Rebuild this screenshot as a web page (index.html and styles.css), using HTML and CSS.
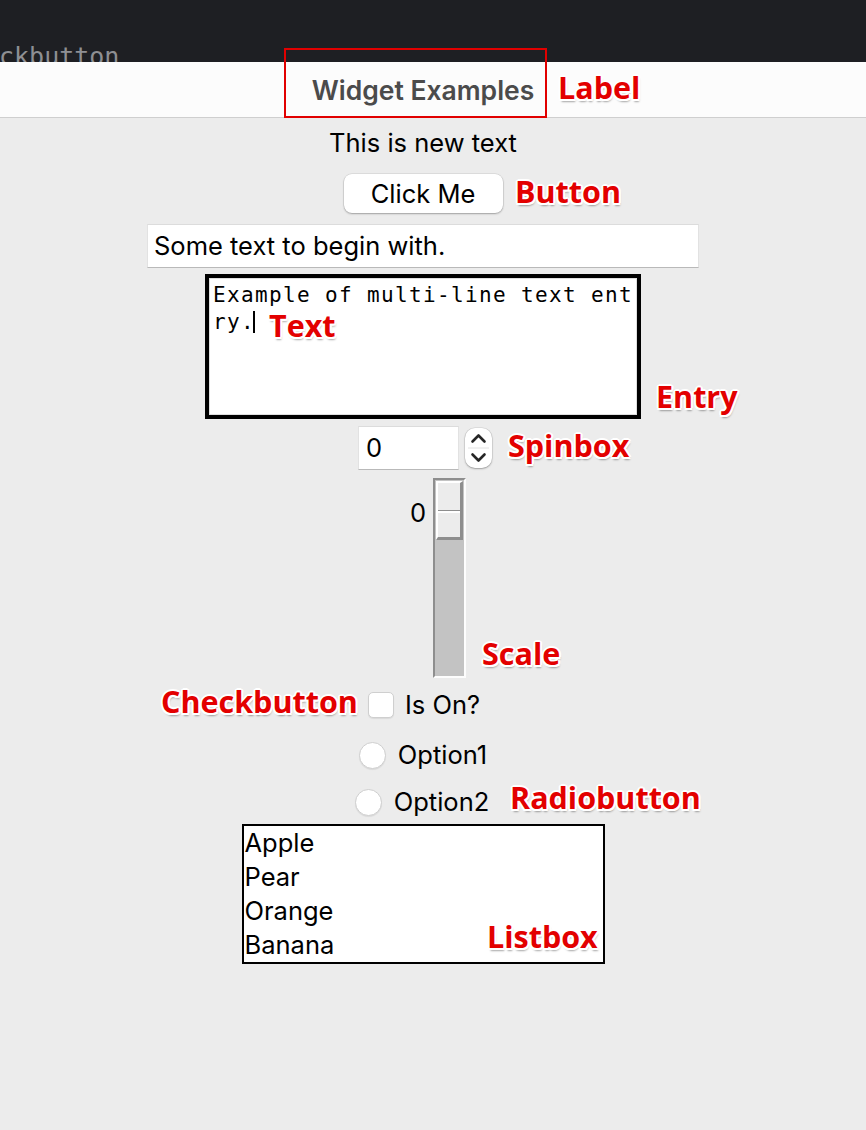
FILE: index.html
```html
<!DOCTYPE html>
<html>
<head>
<meta charset="utf-8">
<title>Widget Examples</title>
<link rel="stylesheet" href="styles.css">
</head>
<body>
<div class="page">
  <div class="topbar"><span class="topbar-text">ckbutton</span></div>
  <div class="titlebar"><span class="title">Widget Examples</span></div>

  <main class="content">
    <div class="newtext">This is new text</div>
    <div class="button">Click Me</div>
    <div class="entry">Some text to begin with.</div>
    <div class="textbox"><div class="textbox-inner">Example of multi-line text ent
ry.<span class="cursor"></span></div></div>

    <div class="spin-row">
      <div class="spin-entry">0</div>
      <div class="spin-arrows">
        <svg width="27" height="40" viewBox="0 0 27 40">
          <path d="M7.5 13.5 L13.5 7.5 L19.5 13.5" fill="none" stroke="#262626" stroke-width="2.6" stroke-linecap="round" stroke-linejoin="round"/>
          <line x1="3" y1="20" x2="24" y2="20" stroke="#e2e2e2" stroke-width="1"/>
          <path d="M7.5 26.5 L13.5 32.5 L19.5 26.5" fill="none" stroke="#262626" stroke-width="2.6" stroke-linecap="round" stroke-linejoin="round"/>
        </svg>
      </div>
    </div>

    <div class="scale">
      <div class="scale-value">0</div>
      <div class="trough">
        <div class="slider"><div class="slider-top"></div><div class="slider-bottom"></div></div>
      </div>
    </div>

    <div class="check-row">
      <span class="checkbox"></span>
      <span class="opt-label">Is On?</span>
    </div>
    <div class="radio-row r1">
      <span class="radio"></span>
      <span class="opt-label">Option1</span>
    </div>
    <div class="radio-row r2">
      <span class="radio"></span>
      <span class="opt-label">Option2</span>
    </div>

    <div class="listbox">
      <div class="item">Apple</div>
      <div class="item">Pear</div>
      <div class="item">Orange</div>
      <div class="item">Banana</div>
    </div>
  </main>

  <div class="hl-box"></div>
  <span class="note n-label">Label</span>
  <span class="note n-button">Button</span>
  <span class="note n-text">Text</span>
  <span class="note n-entry">Entry</span>
  <span class="note n-spin">Spinbox</span>
  <span class="note n-scale">Scale</span>
  <span class="note n-check">Checkbutton</span>
  <span class="note n-radio">Radiobutton</span>
  <span class="note n-list">Listbox</span>
</div>
</body>
</html>
```

FILE: styles.css
```css
html, body {
  margin: 0;
  padding: 0;
  background: #ececec;
}

.page {
  position: relative;
  width: 866px;
  height: 1130px;
  overflow: hidden;
  font-family: "Inter", "Liberation Sans", sans-serif;
  color: #000;
}

.topbar {
  height: 62px;
  background: #1e1f23;
  overflow: hidden;
}

.topbar-text {
  display: block;
  margin-left: -1px;
  padding-top: 44px;
  font-family: "DejaVu Sans Mono", monospace;
  font-size: 25px;
  line-height: 26px;
  color: #8e8f93;
  white-space: nowrap;
}

.titlebar {
  height: 55px;
  width: 866px;
  background: #fcfcfc;
  border-bottom: 1px solid #cfcfcf;
  display: flex;
  align-items: center;
  justify-content: center;
}

.title {
  margin-left: -20px;
  font-weight: 600;
  font-size: 26.5px;
  color: #4b4b4b;
}

.content {
  width: 846px;
  display: flex;
  flex-direction: column;
  align-items: center;
  font-size: 25.5px;
}

.newtext {
  margin-top: 9px;
  height: 32px;
  line-height: 32px;
}

.button {
  margin-top: 15px;
  width: 159px;
  height: 39px;
  box-sizing: border-box;
  background: #fff;
  border-radius: 8px;
  box-shadow: 0 0 0 0.5px rgba(0,0,0,0.12), 0 1px 2px rgba(0,0,0,0.28);
  text-align: center;
  line-height: 39px;
}

.entry {
  margin-top: 11px;
  width: 552px;
  height: 44px;
  box-sizing: border-box;
  background: #fff;
  border-top: 1px solid #dcdcdc;
  border-left: 1px solid #e2e2e2;
  border-right: 1px solid #e2e2e2;
  border-bottom: 1px solid #b9b9b9;
  padding-left: 6px;
  line-height: 42px;
}

.textbox {
  margin-top: 6px;
  width: 436px;
  height: 145px;
  box-sizing: border-box;
  border: 4px solid #000;
  background: #fff;
}

.textbox-inner {
  height: 100%;
  box-sizing: border-box;
  border: 1px solid #dedede;
  padding: 3px 0 0 3px;
  font-family: "DejaVu Sans Mono", monospace;
  font-size: 21px;
  letter-spacing: 1.36px;
  line-height: 27px;
  white-space: pre;
}

.cursor {
  display: inline-block;
  width: 2px;
  height: 22px;
  background: #000;
  margin-left: -2px;
  vertical-align: -4px;
}

.spin-row {
  margin-top: 7px;
  height: 44px;
  display: flex;
  align-items: center;
  gap: 6px;
  margin-left: 4px;
}

.spin-entry {
  width: 101px;
  height: 44px;
  box-sizing: border-box;
  background: #fff;
  border-top: 1px solid #dcdcdc;
  border-left: 1px solid #e2e2e2;
  border-right: 1px solid #e2e2e2;
  border-bottom: 1px solid #b9b9b9;
  padding-left: 7px;
  line-height: 42px;
}

.spin-arrows {
  width: 27px;
  height: 40px;
  background: #fff;
  border-radius: 10px;
  box-shadow: 0 0 0 0.5px rgba(0,0,0,0.12), 0 1px 2px rgba(0,0,0,0.28);
}

.spin-arrows svg {
  display: block;
}

.scale {
  margin-top: 8px;
  width: 86px;
  height: 200px;
  display: flex;
  justify-content: flex-end;
  gap: 7px;
}

.scale-value {
  margin-top: 19px;
  line-height: 32px;
  height: 32px;
}

.trough {
  width: 33px;
  height: 200px;
  box-sizing: border-box;
  background: #c3c3c3;
  border-left: 2px solid #8e8e8e;
  border-top: 2px solid #8e8e8e;
  border-right: 2px solid #fdfdfd;
  border-bottom: 2px solid #fdfdfd;
  padding: 1px 0 0 1px;
}

.slider {
  width: 27px;
  height: 59px;
  box-sizing: border-box;
  border-top: 2px solid #fff;
  border-left: 2px solid #fff;
  border-right: 3px solid #8e8e8e;
  border-bottom: 3px solid #8e8e8e;
  background: #ececec;
}

.slider-top {
  height: 27px;
  border-bottom: 1px solid #8e8e8e;
}

.slider-bottom {
  border-top: 2px solid #fff;
}

.check-row {
  margin-top: 12px;
  height: 30px;
  display: flex;
  align-items: center;
  gap: 11px;
  margin-left: 2px;
}

.checkbox {
  width: 26px;
  height: 26px;
  box-sizing: border-box;
  background: #fff;
  border-radius: 5px;
  border: 1px solid #cfcfcf;
  box-shadow: 0 1px 1px rgba(0,0,0,0.08);
}

.radio-row {
  height: 30px;
  display: flex;
  align-items: center;
  gap: 12px;
}

.r1 {
  margin-top: 20px;
}

.r2 {
  margin-top: 17px;
  margin-left: -2px;
}

.radio {
  width: 27px;
  height: 27px;
  box-sizing: border-box;
  border-radius: 50%;
  background: #fff;
  border: 1px solid #cfcfcf;
  box-shadow: 0 1px 1px rgba(0,0,0,0.08);
}

.opt-label {
  line-height: 30px;
}

.listbox {
  margin-top: 7px;
  width: 363px;
  height: 140px;
  box-sizing: border-box;
  border: 2px solid #000;
  background: #fff;
  padding-left: 1px;
}

.item {
  height: 34px;
  line-height: 34px;
}

/* annotation overlays */
.hl-box {
  position: absolute;
  left: 284px;
  top: 48px;
  width: 263px;
  height: 70px;
  box-sizing: border-box;
  border: 2px solid #e10000;
}

.note {
  position: absolute;
  font-family: "Open Sans", "Noto Sans", sans-serif;
  font-weight: 700;
  font-size: 30.5px;
  line-height: 30px;
  color: #e30000;
  white-space: nowrap;
  text-shadow:
    -2px 0 0 #fff, 2px 0 0 #fff, 0 -2px 0 #fff, 0 2px 0 #fff,
    -1.5px -1.5px 0 #fff, 1.5px -1.5px 0 #fff, -1.5px 1.5px 0 #fff, 1.5px 1.5px 0 #fff,
    1px 3px 2px rgba(0,0,0,0.35);
}

.n-label { left: 558px; top: 72px; }
.n-button { left: 515px; top: 176px; }
.n-text { left: 269px; top: 310px; }
.n-entry { left: 656px; top: 381px; }
.n-spin { left: 508px; top: 430px; }
.n-scale { left: 482px; top: 638px; }
.n-check { left: 161px; top: 686px; }
.n-radio { left: 510px; top: 782px; }
.n-list { left: 487px; top: 921px; }
```
